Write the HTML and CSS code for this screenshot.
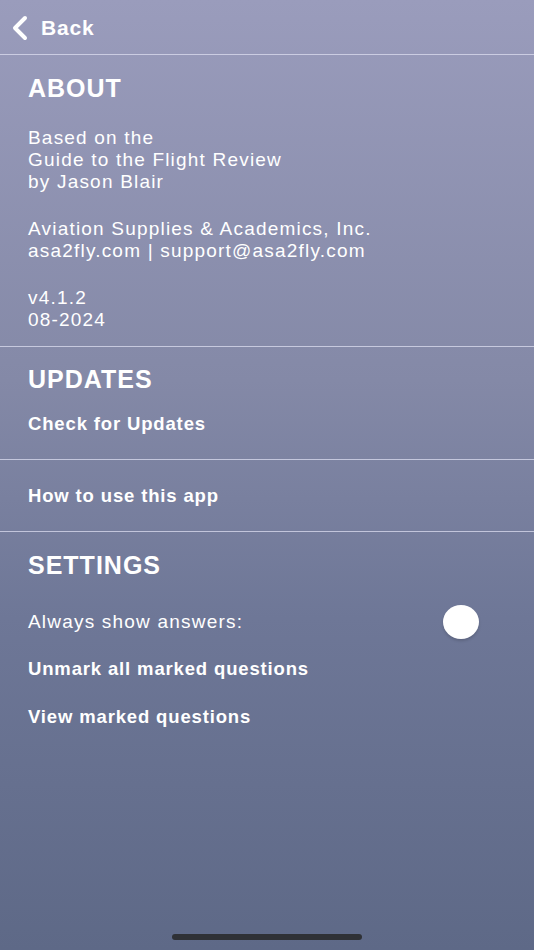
FILE: index.html
```html
<!DOCTYPE html>
<html>
<head>
<meta charset="utf-8">
<link rel="stylesheet" href="styles.css">
</head>
<body>
<div class="screen">
  <header class="nav">
    <svg class="chev" width="20" height="26" viewBox="0 0 20 26"><path d="M15 3 L5 13 L15 23" fill="none" stroke="#fff" stroke-width="4" stroke-linecap="round" stroke-linejoin="round"/></svg>
    <span class="back">Back</span>
  </header>
  <section class="sec about">
    <h2>ABOUT</h2>
    <p class="body">Based on the<br>Guide to the Flight Review<br>by Jason Blair</p>
    <p class="body">Aviation Supplies &amp; Academics, Inc.<br>asa2fly.com | support@asa2fly.com</p>
    <p class="body">v4.1.2<br>08-2024</p>
  </section>
  <section class="sec updates">
    <h2>UPDATES</h2>
    <div class="link">Check for Updates</div>
  </section>
  <section class="sec howto">
    <div class="link">How to use this app</div>
  </section>
  <section class="sec settings">
    <h2>SETTINGS</h2>
    <div class="row">
      <span class="body">Always show answers:</span>
      <span class="toggle"><span class="knob"></span></span>
    </div>
    <div class="link l2">Unmark all marked questions</div>
    <div class="link l3">View marked questions</div>
  </section>
  <div class="spacer"></div>
  <div class="home"></div>
</div>
</body>
</html>
```
FILE: styles.css
```css
html, body { margin: 0; padding: 0; }
body {
  width: 534px;
  height: 950px;
  overflow: hidden;
  font-family: "Liberation Sans", Arial, sans-serif;
  color: #fff;
}
.screen {
  height: 950px;
  display: flex;
  flex-direction: column;
  background: linear-gradient(180deg, #9a9cbc 0%, #8489a7 40%, #6e7797 65%, #5e6987 100%);
}
.nav {
  height: 55px;
  display: flex;
  align-items: center;
  padding-left: 10px;
  padding-top: 1px;
  box-sizing: border-box;
  border-bottom: 1.5px solid rgba(220, 222, 240, 0.75);
}
.chev { margin-right: 11px; }
.back {
  font-size: 21px;
  font-weight: bold;
  letter-spacing: 0.8px;
}
.sec {
  padding: 0 28px;
  border-bottom: 1.5px solid rgba(220, 222, 240, 0.75);
}
h2 {
  margin: 0;
  font-size: 25px;
  line-height: 29px;
  font-weight: bold;
  letter-spacing: 1px;
}
.about { padding-top: 19px; padding-bottom: 12px; }
.about h2 { margin-bottom: 24px; }
.body {
  margin: 0 0 25px;
  font-size: 19px;
  line-height: 22px;
  letter-spacing: 1.2px;
}
.about .body:last-child { margin-bottom: 3px; }
.link {
  font-size: 18.5px;
  font-weight: bold;
  line-height: 22px;
  letter-spacing: 0.85px;
}
.updates { padding-top: 18px; padding-bottom: 24px; }
.updates h2 { margin-bottom: 19px; }
.howto { padding-top: 25px; padding-bottom: 24px; }
.settings { border-bottom: none; padding-top: 19px; }
.settings h2 { margin-bottom: 24px; }
.row {
  display: flex;
  align-items: center;
  justify-content: space-between;
  height: 36px;
}
.row .body { margin: 0; }
.toggle {
  width: 64px;
  height: 36px;
  border-radius: 18px;
  display: flex;
  align-items: center;
  justify-content: flex-start;
  padding-left: 1px;
  box-sizing: border-box;
}
.knob {
  width: 36px;
  height: 34px;
  border-radius: 50%;
  background: #fff;
  box-shadow: 0 2px 3px rgba(0, 0, 0, 0.15);
}
.l2 { margin-top: 18px; }
.l3 { margin-top: 26px; }
.spacer { flex: 1; }
.home {
  align-self: center;
  width: 190px;
  height: 6px;
  border-radius: 3px;
  background: #2f3136;
  margin-bottom: 10px;
}
```
